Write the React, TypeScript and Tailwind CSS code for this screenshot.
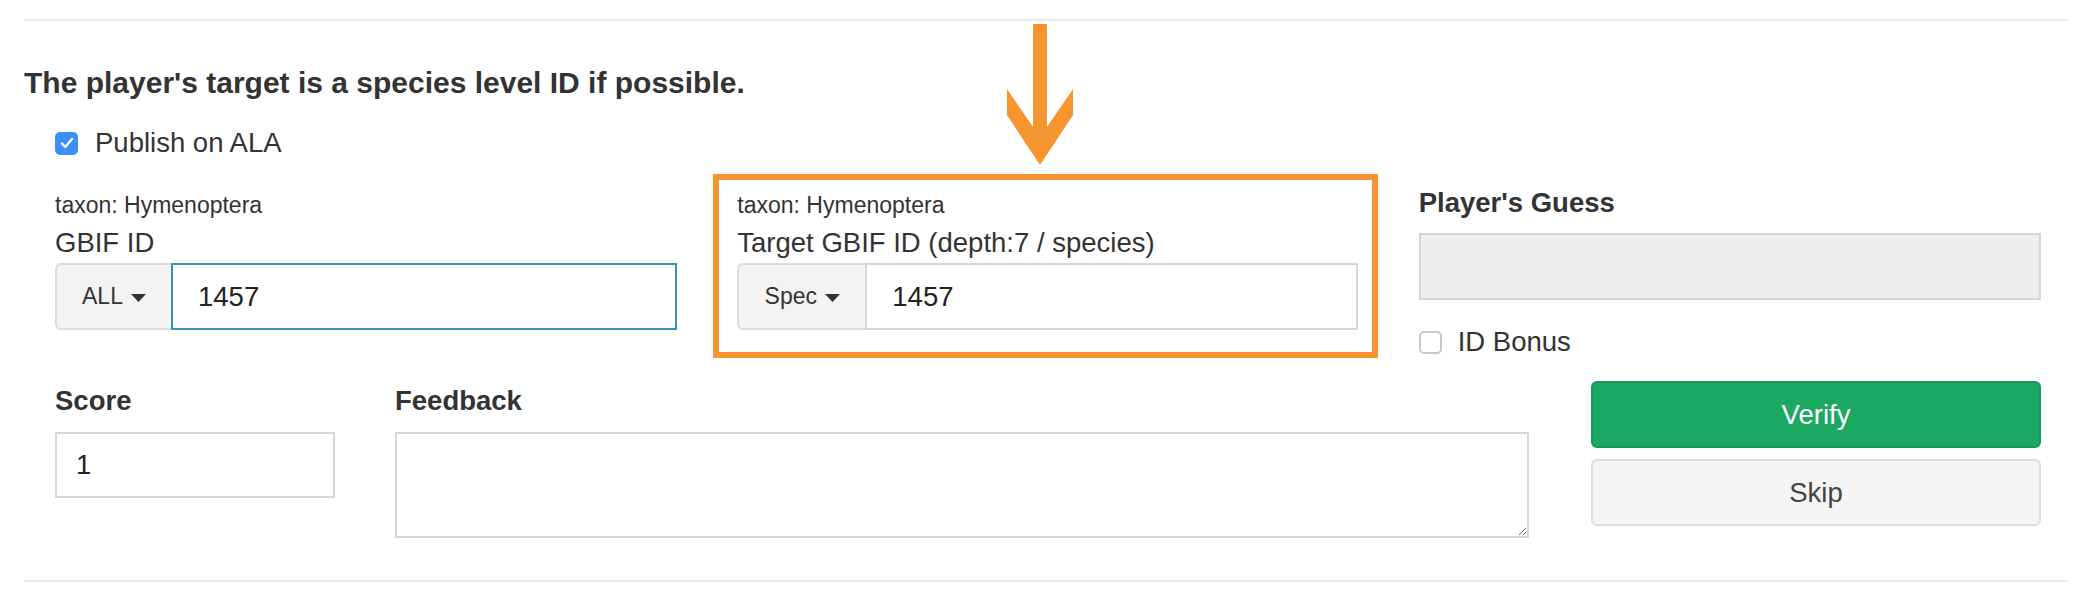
import React from "react";

function Caret() {
  return (
    <svg width="15" height="8" viewBox="0 0 15 8" className="translate-y-[1px]">
      <path d="M0 0h15L7.5 8z" fill="#333" />
    </svg>
  );
}

function Box({ checked }: { checked?: boolean }) {
  if (checked) {
    return (
      <span className="flex h-[23px] w-[23px] items-center justify-center rounded-[5px] bg-[#3d8ff6]">
        <svg width="14" height="12" viewBox="0 0 14 12">
          <path d="M2 6.5l3.3 3.5L12 2" fill="none" stroke="#fff" strokeWidth="2.4" strokeLinecap="round" strokeLinejoin="round" />
        </svg>
      </span>
    );
  }
  return <span className="h-[23px] w-[23px] rounded-[5px] border-2 border-[#c9c9c9] bg-white" />;
}

function IdGroup({ addon, addonWidth, focused }: { addon: string; addonWidth: string; focused?: boolean }) {
  return (
    <div className="mt-[5px] flex h-[67px]">
      <div
        className={`flex ${addonWidth} items-center justify-center gap-[8px] rounded-l-[6px] border-2 border-r-0 border-[#dcdcdc] bg-[#f3f3f3] text-[23px]`}
      >
        <span>{addon}</span>
        <Caret />
      </div>
      <div
        className={`flex flex-1 items-center border-2 pl-[25px] text-[27.5px] text-[#222] ${
          focused ? "border-[#3c8dbc]" : "border-[#d2d6de]"
        }`}
      >
        1457
      </div>
    </div>
  );
}

export default function App() {
  return (
    <div className="relative min-h-[610px] bg-white px-[24px] pt-[19px] font-['Liberation_Sans',Arial,sans-serif] text-[#333]">
      <div className="h-[2px] bg-[#ebebeb]" />

      <h4 className="mt-[44px] text-[30px] leading-[36px] font-bold">
        The player's target is a species level ID if possible.
      </h4>

      <label className="mt-[26px] ml-[31px] flex h-[32px] items-center gap-[17px] text-[27.5px] leading-[32px]">
        <Box checked />
        <span>Publish on ALA</span>
      </label>

      {/* id row */}
      <div className="mt-[15px] grid grid-cols-3">
        <div className="pt-[18px] pr-[28px] pl-[31px]">
          <div className="text-[23px] leading-[26px]">taxon: Hymenoptera</div>
          <div className="mt-[10px] text-[27.5px] leading-[30px]">GBIF ID</div>
          <IdGroup addon="ALL" addonWidth="w-[116px]" focused />
        </div>

        <div className="mr-[9px] ml-[8px] border-[6px] border-[#f6952f] pt-[12px] pr-[14px] pb-[22px] pl-[18px]">
          <div className="text-[23px] leading-[26px]">taxon: Hymenoptera</div>
          <div className="mt-[10px] text-[27.5px] leading-[30px]">Target GBIF ID (depth:7 / species)</div>
          <IdGroup addon="Spec" addonWidth="w-[128px]" />
        </div>

        <div className="pt-[14px] pr-[27px] pl-[32px]">
          <div className="text-[27.5px] leading-[30px] font-bold">Player's Guess</div>
          <div className="mt-[15px] h-[67px] border-2 border-[#d2d6de] bg-[#eeeeee]" />
          <label className="mt-[27px] flex h-[30px] items-center gap-[16px] text-[27.5px] leading-[30px]">
            <Box />
            <span>ID Bonus</span>
          </label>
        </div>
      </div>

      {/* score row */}
      <div className="grid grid-cols-[341px_1192px_1fr]">
        <div className="pt-[28px] pr-[30px] pl-[31px]">
          <div className="text-[27.5px] leading-[30px] font-bold">Score</div>
          <div className="mt-[16px] flex h-[66px] items-center border-2 border-[#d2d6de] pl-[19px] text-[27.5px] text-[#222]">
            1
          </div>
        </div>
        <div className="pt-[28px] pr-[28px] pl-[30px]">
          <div className="text-[27.5px] leading-[30px] font-bold">Feedback</div>
          <textarea className="mt-[16px] block h-[106px] w-full border-2 border-[#d2d6de] outline-none" />
        </div>
        <div className="pt-[23px] pr-[27px] pl-[34px]">
          <button className="flex h-[67px] w-full items-center justify-center rounded-[6px] border-2 border-[#17965a] bg-[#1ba862] text-[27.5px] text-white">
            Verify
          </button>
          <button className="mt-[11px] flex h-[67px] w-full items-center justify-center rounded-[6px] border-2 border-[#dddddd] bg-[#f4f4f4] text-[27.5px] text-[#444]">
            Skip
          </button>
        </div>
      </div>

      <div className="mt-[42px] h-[2px] bg-[#ebebeb]" />

      {/* annotation arrow */}
      <svg className="absolute top-[24px] left-[1007px]" width="66" height="141" viewBox="0 0 66 141">
        <polygon points="26,0 40,0 40,103 66,65 66,91 33,141 0,91 0,65 26,103" fill="#f6952f" />
      </svg>
    </div>
  );
}
